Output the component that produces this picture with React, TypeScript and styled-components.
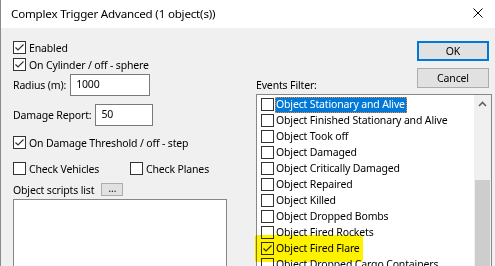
import React from 'react';
import styled, {createGlobalStyle, css} from 'styled-components';

const GlobalStyle = createGlobalStyle`
  html, body {
    margin: 0;
    padding: 0;
    background: #f0f0f0;
  }
  body {
    font-family: "Noto Sans", "Open Sans", sans-serif;
    font-size: 10.5px;
    letter-spacing: -0.15px;
    color: #000;
  }
`;

const Window = styled.div`
  position: relative;
  box-sizing: border-box;
  width: 495px;
  height: 266px;
  overflow: hidden;
  display: flex;
  flex-direction: column;
  background: #f0f0f0;
  border-left: 1px solid #8a8a8a;
`;

const TitleBar = styled.div`
  flex: none;
  height: 28px;
  display: flex;
  align-items: center;
  justify-content: space-between;
  padding: 0 1px 2px 10px;
  box-sizing: border-box;
  background: #fff;
  font-size: 11.6px;
  letter-spacing: -0.2px;
`;

const CloseIcon = styled.svg`
  width: 10px;
  height: 10px;
  margin-right: 11px;
`;

const Body = styled.div`
  flex: 1;
  display: flex;
`;

const LeftPane = styled.div`
  width: 243px;
  flex: none;
  padding: 11px 0 0 12px;
  display: flex;
  flex-direction: column;
`;

const CheckRow = styled.label<{$gap?: number}>`
  height: 17px;
  display: flex;
  align-items: center;
  gap: 3px;
  margin-top: ${p => p.$gap ?? 0}px;
  white-space: nowrap;
`;

const Box = styled.span`
  box-sizing: border-box;
  width: 13px;
  height: 13px;
  flex: none;
  border: 1px solid #333;
  background: #fff;
  display: flex;
`;

const FieldRow = styled.div<{$gap: number}>`
  display: flex;
  align-items: center;
  gap: 4px;
  margin-top: ${p => p.$gap}px;
`;

const TextInput = styled.div<{$width: number}>`
  box-sizing: border-box;
  width: ${p => p.$width}px;
  height: 22px;
  border: 1px solid #7a7a7a;
  background: #fff;
  padding: 1px 0 0 5px;
  line-height: 16px;
`;

const PairRow = styled.div`
  display: grid;
  grid-template-columns: 117px auto;
  margin-top: 9px;
`;

const ScriptsRow = styled.div`
  display: flex;
  align-items: center;
  gap: 7px;
  height: 13px;
  margin-top: 6px;
`;

const SmallButton = styled.span`
  box-sizing: border-box;
  width: 22px;
  height: 13px;
  background: #e1e1e1;
  border: 1px solid #adadad;
  display: flex;
  align-items: center;
  justify-content: center;
  font-size: 10px;
  line-height: 8px;
  padding-bottom: 3px;
`;

const ScriptsList = styled.div`
  box-sizing: border-box;
  width: 214px;
  height: 90px;
  margin-top: 3px;
  border: 1px solid #828790;
  background: #fff;
`;

const RightPane = styled.div`
  flex: 1;
  padding: 13px 3px 0 0;
  display: flex;
  flex-direction: column;
`;

const Header = styled.div`
  display: flex;
  justify-content: space-between;
  align-items: flex-end;
`;

const FilterLabel = styled.div`
  line-height: 14px;
  padding-bottom: 2px;
`;

const ButtonStack = styled.div`
  display: flex;
  flex-direction: column;
  gap: 7px;
  margin-right: 3px;
  padding-bottom: 6px;
`;

const DialogButton = styled.div<{$default?: boolean}>`
  box-sizing: border-box;
  width: 72px;
  height: 20px;
  display: flex;
  align-items: center;
  justify-content: center;
  background: #e1e1e1;
  border: 1px solid #adadad;
  ${p =>
    p.$default &&
    css`
      border: 2px solid #0078d7;
    `}
`;

const ListBox = styled.div`
  box-sizing: border-box;
  height: 200px;
  display: flex;
  border: 1px solid #828790;
  background: #fff;
`;

const Items = styled.div`
  flex: 1;
  padding: 2px 0 0 4px;
`;

const ItemRow = styled.div`
  height: 16px;
  display: flex;
  align-items: flex-start;
  white-space: nowrap;
`;

const ItemBox = styled(Box)`
  margin-top: 1px;
`;

const ItemText = styled.span<{$selected?: boolean}>`
  box-sizing: border-box;
  height: 16px;
  line-height: 15px;
  padding: 0 2px 0 1px;
  margin-left: 1px;
  ${p =>
    p.$selected &&
    css`
      background: #0078d7;
      color: #fff;
      outline: 1px dotted #ff8728;
      outline-offset: -1px;
    `}
`;

const ScrollBar = styled.div`
  width: 17px;
  flex: none;
  display: flex;
  flex-direction: column;
  background: #f0f0f0;
`;

const ArrowButton = styled.div`
  height: 17px;
  display: flex;
  align-items: center;
  justify-content: center;
`;

const Thumb = styled.div`
  flex: 1;
  margin: 68px 1px 0;
  background: #cdcdcd;
`;

const Highlight = styled.div`
  position: absolute;
  left: 254px;
  top: 235px;
  width: 108px;
  height: 27px;
  border-radius: 2px;
  background: #fff200;
  mix-blend-mode: multiply;
  pointer-events: none;
`;

const Check = () => (
  <svg width="11" height="11" viewBox="0 0 11 11">
    <polyline points="1.5,5.5 4,8 9.5,2.5" fill="none" stroke="#333" strokeWidth="1.2" />
  </svg>
);

const CheckBox = ({checked, label, gap}: {checked?: boolean; label: string; gap?: number}) => (
  <CheckRow $gap={gap}>
    <Box>{checked && <Check />}</Box>
    {label}
  </CheckRow>
);

const events = [
  {title: 'Object Stationary and Alive', selected: true},
  {title: 'Object Finished Stationary and Alive'},
  {title: 'Object Took off'},
  {title: 'Object Damaged'},
  {title: 'Object Critically Damaged'},
  {title: 'Object Repaired'},
  {title: 'Object Killed'},
  {title: 'Object Dropped Bombs'},
  {title: 'Object Fired Rockets'},
  {title: 'Object Fired Flare', checked: true},
  {title: 'Object Dropped Cargo Containers'},
];

export default function App() {
  return (
    <>
      <GlobalStyle />
      <Window>
        <TitleBar>
          <span>Complex Trigger Advanced (1 object(s))</span>
          <CloseIcon viewBox="0 0 10 10">
            <path d="M0.5 0.5 L9.5 9.5 M9.5 0.5 L0.5 9.5" stroke="#000" strokeWidth="1" />
          </CloseIcon>
        </TitleBar>
        <Body>
          <LeftPane>
            <CheckBox checked label="Enabled" />
            <CheckBox checked label="On Cylinder / off - sphere" />
            <FieldRow $gap={1}>
              Radius (m):
              <TextInput $width={80}>1000</TextInput>
            </FieldRow>
            <FieldRow $gap={8}>
              Damage Report:
              <TextInput $width={58}>50</TextInput>
            </FieldRow>
            <CheckBox checked label="On Damage Threshold / off - step" gap={8} />
            <PairRow>
              <CheckBox label="Check Vehicles" />
              <CheckBox label="Check Planes" />
            </PairRow>
            <ScriptsRow>
              Object scripts list
              <SmallButton>...</SmallButton>
            </ScriptsRow>
            <ScriptsList />
          </LeftPane>
          <RightPane>
            <Header>
              <FilterLabel>Events Filter:</FilterLabel>
              <ButtonStack>
                <DialogButton $default>OK</DialogButton>
                <DialogButton>Cancel</DialogButton>
              </ButtonStack>
            </Header>
            <ListBox>
              <Items>
                {events.map(({title, selected, checked}) => (
                  <ItemRow key={title}>
                    <ItemBox>{checked && <Check />}</ItemBox>
                    <ItemText $selected={selected}>{title}</ItemText>
                  </ItemRow>
                ))}
              </Items>
              <ScrollBar>
                <ArrowButton>
                  <svg width="9" height="6" viewBox="0 0 9 6">
                    <polyline points="1,5 4.5,1.5 8,5" fill="none" stroke="#606060" strokeWidth="1.6" />
                  </svg>
                </ArrowButton>
                <Thumb />
              </ScrollBar>
            </ListBox>
          </RightPane>
        </Body>
        <Highlight />
      </Window>
    </>
  );
}
